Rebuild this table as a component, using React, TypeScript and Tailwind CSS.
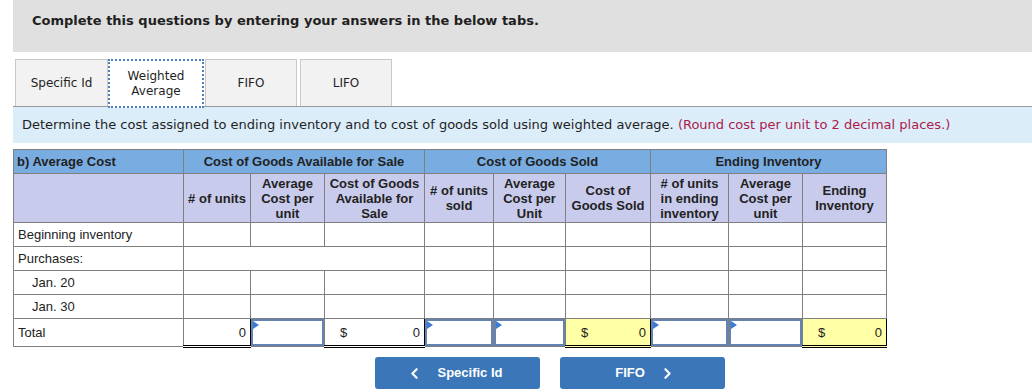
import { ChevronLeft, ChevronRight } from "lucide-react";

const cell = "border border-[#7f7f7f] p-0";
const grp = "border-l-black";

function Marker() {
  // little blue flag shown at the corner of an editable field
  return (
    <span className="absolute left-0 top-0 h-0 w-0 border-y-[4px] border-l-[6px] border-y-transparent border-l-[#3a7bd5]" />
  );
}

function InputCell() {
  return (
    <td className={`${cell} h-[28px]`}>
      <div className="relative h-[27px] border-2 border-[#6483b0] bg-white">
        <Marker />
      </div>
    </td>
  );
}

function ValueCell({
  value,
  dollar,
  yellow,
}: {
  value: string;
  dollar?: boolean;
  yellow?: boolean;
}) {
  return (
    <td
      className={`border border-black border-b-[3px] [border-bottom-style:double] p-0 h-[28px] ${
        yellow ? "bg-[#ffffa6]" : "bg-white"
      }`}
    >
      <div className="flex h-[25px] items-center justify-between px-[4px]">
        <span className="pl-[11px]">{dollar ? "$" : ""}</span>
        <span>{value}</span>
      </div>
    </td>
  );
}

function Tab({
  label,
  active,
  className,
}: {
  label: React.ReactNode;
  active?: boolean;
  className?: string;
}) {
  return (
    <div
      className={`flex items-center justify-center text-center text-[12px] leading-[15px] ${
        active
          ? "relative z-10 h-[49px] border-2 border-dotted border-[#4f7fbd] bg-white"
          : "h-[47px] border border-b-0 border-[#c8c8c8] bg-[#f2f2f2]"
      } ${className ?? ""}`}
    >
      {label}
    </div>
  );
}

const rows = ["Jan. 20", "Jan. 30"];

export default function App() {
  return (
    <div className="h-[392px] w-[1032px] overflow-hidden bg-white font-['Verdana','DejaVu_Sans',sans-serif] text-[#1f1f1f]">
      <div className="ml-[13px] h-[52px] bg-[#e0e0e0] pl-[19px] pt-[11px] text-[13px] font-bold">
        Complete this questions by entering your answers in the below tabs.
      </div>

      <div className="ml-[15px] mt-[7px] flex h-[47px] items-start">
        <Tab label="Specific Id" className="w-[93px]" />
        <Tab
          label={
            <span>
              Weighted
              <br />
              Average
            </span>
          }
          active
          className="w-[96px]"
        />
        <Tab label="FIFO" className="ml-[1px] w-[92px]" />
        <Tab label="LIFO" className="ml-[3px] w-[92px]" />
      </div>

      <div className="ml-[13px] flex h-[37px] items-center border-t border-[#9a9a9a] bg-[#dcedfa] pl-[9px] text-[13px]">
        Determine the cost assigned to ending inventory and to cost of goods sold using weighted average.&nbsp;
        <span className="text-[#ad1a4c]">(Round cost per unit to 2 decimal places.)</span>
      </div>

      <table className="ml-[13px] mt-[6px] table-fixed border-collapse font-['Arial','Liberation_Sans',sans-serif] text-[13px] leading-[15px] text-[#222]">
        <colgroup>
          <col className="w-[170px]" />
          <col className="w-[67px]" />
          <col className="w-[74px]" />
          <col className="w-[100px]" />
          <col className="w-[69px]" />
          <col className="w-[72px]" />
          <col className="w-[85px]" />
          <col className="w-[78px]" />
          <col className="w-[74px]" />
          <col className="w-[84px]" />
        </colgroup>
        <thead className="font-bold">
          <tr className="h-[24px] bg-[#79ade2]">
            <th className={`${cell} pl-[3px] text-left`}>b) Average Cost</th>
            <th colSpan={3} className={`${cell} ${grp}`}>
              Cost of Goods Available for Sale
            </th>
            <th colSpan={3} className={`${cell} ${grp}`}>
              Cost of Goods Sold
            </th>
            <th colSpan={3} className={`${cell} ${grp}`}>
              Ending Inventory
            </th>
          </tr>
          <tr className="h-[49px] bg-[#c9cbed]">
            <th className={cell}></th>
            <th className={`${cell} ${grp}`}># of units</th>
            <th className={cell}>
              Average
              <br />
              Cost per
              <br />
              unit
            </th>
            <th className={cell}>
              Cost of Goods
              <br />
              Available for
              <br />
              Sale
            </th>
            <th className={`${cell} ${grp}`}>
              # of units
              <br />
              sold
            </th>
            <th className={cell}>
              Average
              <br />
              Cost per
              <br />
              Unit
            </th>
            <th className={cell}>
              Cost of
              <br />
              Goods Sold
            </th>
            <th className={`${cell} ${grp}`}>
              # of units
              <br />
              in ending
              <br />
              inventory
            </th>
            <th className={cell}>
              Average
              <br />
              Cost per
              <br />
              unit
            </th>
            <th className={cell}>
              Ending
              <br />
              Inventory
            </th>
          </tr>
        </thead>
        <tbody>
          <tr className="h-[24px]">
            <td className={`${cell} pl-[4px]`}>Beginning inventory</td>
            <td className={`${cell} ${grp}`}></td>
            <td className={cell}></td>
            <td className={cell}></td>
            <td className={`${cell} ${grp}`}></td>
            <td className={cell}></td>
            <td className={cell}></td>
            <td className={`${cell} ${grp}`}></td>
            <td className={cell}></td>
            <td className={cell}></td>
          </tr>
          <tr className="h-[24px]">
            <td className={`${cell} pl-[4px]`}>Purchases:</td>
            <td colSpan={3} className={`${cell} ${grp}`}></td>
            <td className={`${cell} ${grp}`}></td>
            <td className={cell}></td>
            <td className={cell}></td>
            <td className={`${cell} ${grp}`}></td>
            <td className={cell}></td>
            <td className={cell}></td>
          </tr>
          {rows.map((r) => (
            <tr key={r} className="h-[24px]">
              <td className={`${cell} pl-[18px]`}>{r}</td>
              <td className={`${cell} ${grp}`}></td>
              <td className={cell}></td>
              <td className={cell}></td>
              <td className={`${cell} ${grp}`}></td>
              <td className={cell}></td>
              <td className={cell}></td>
              <td className={`${cell} ${grp}`}></td>
              <td className={cell}></td>
              <td className={cell}></td>
            </tr>
          ))}
          <tr className="h-[28px]">
            <td className={`${cell} pl-[4px]`}>Total</td>
            <ValueCell value="0" />
            <InputCell />
            <ValueCell value="0" dollar />
            <InputCell />
            <InputCell />
            <ValueCell value="0" dollar yellow />
            <InputCell />
            <InputCell />
            <ValueCell value="0" dollar yellow />
          </tr>
        </tbody>
      </table>

      <div className="ml-[375px] mt-[9px] flex gap-[20px] font-['Arial','Liberation_Sans',sans-serif] text-[13px] font-bold text-white">
        <button className="flex h-[32px] w-[165px] items-center justify-center gap-[14px] rounded-[3px] bg-[#3b77b8]">
          <ChevronLeft size={17} strokeWidth={3} />
          <span className="pr-[6px]">Specific Id</span>
        </button>
        <button className="flex h-[32px] w-[165px] items-center justify-center gap-[14px] rounded-[3px] bg-[#3b77b8]">
          <span className="pl-[6px]">FIFO</span>
          <ChevronRight size={17} strokeWidth={3} />
        </button>
      </div>
    </div>
  );
}
